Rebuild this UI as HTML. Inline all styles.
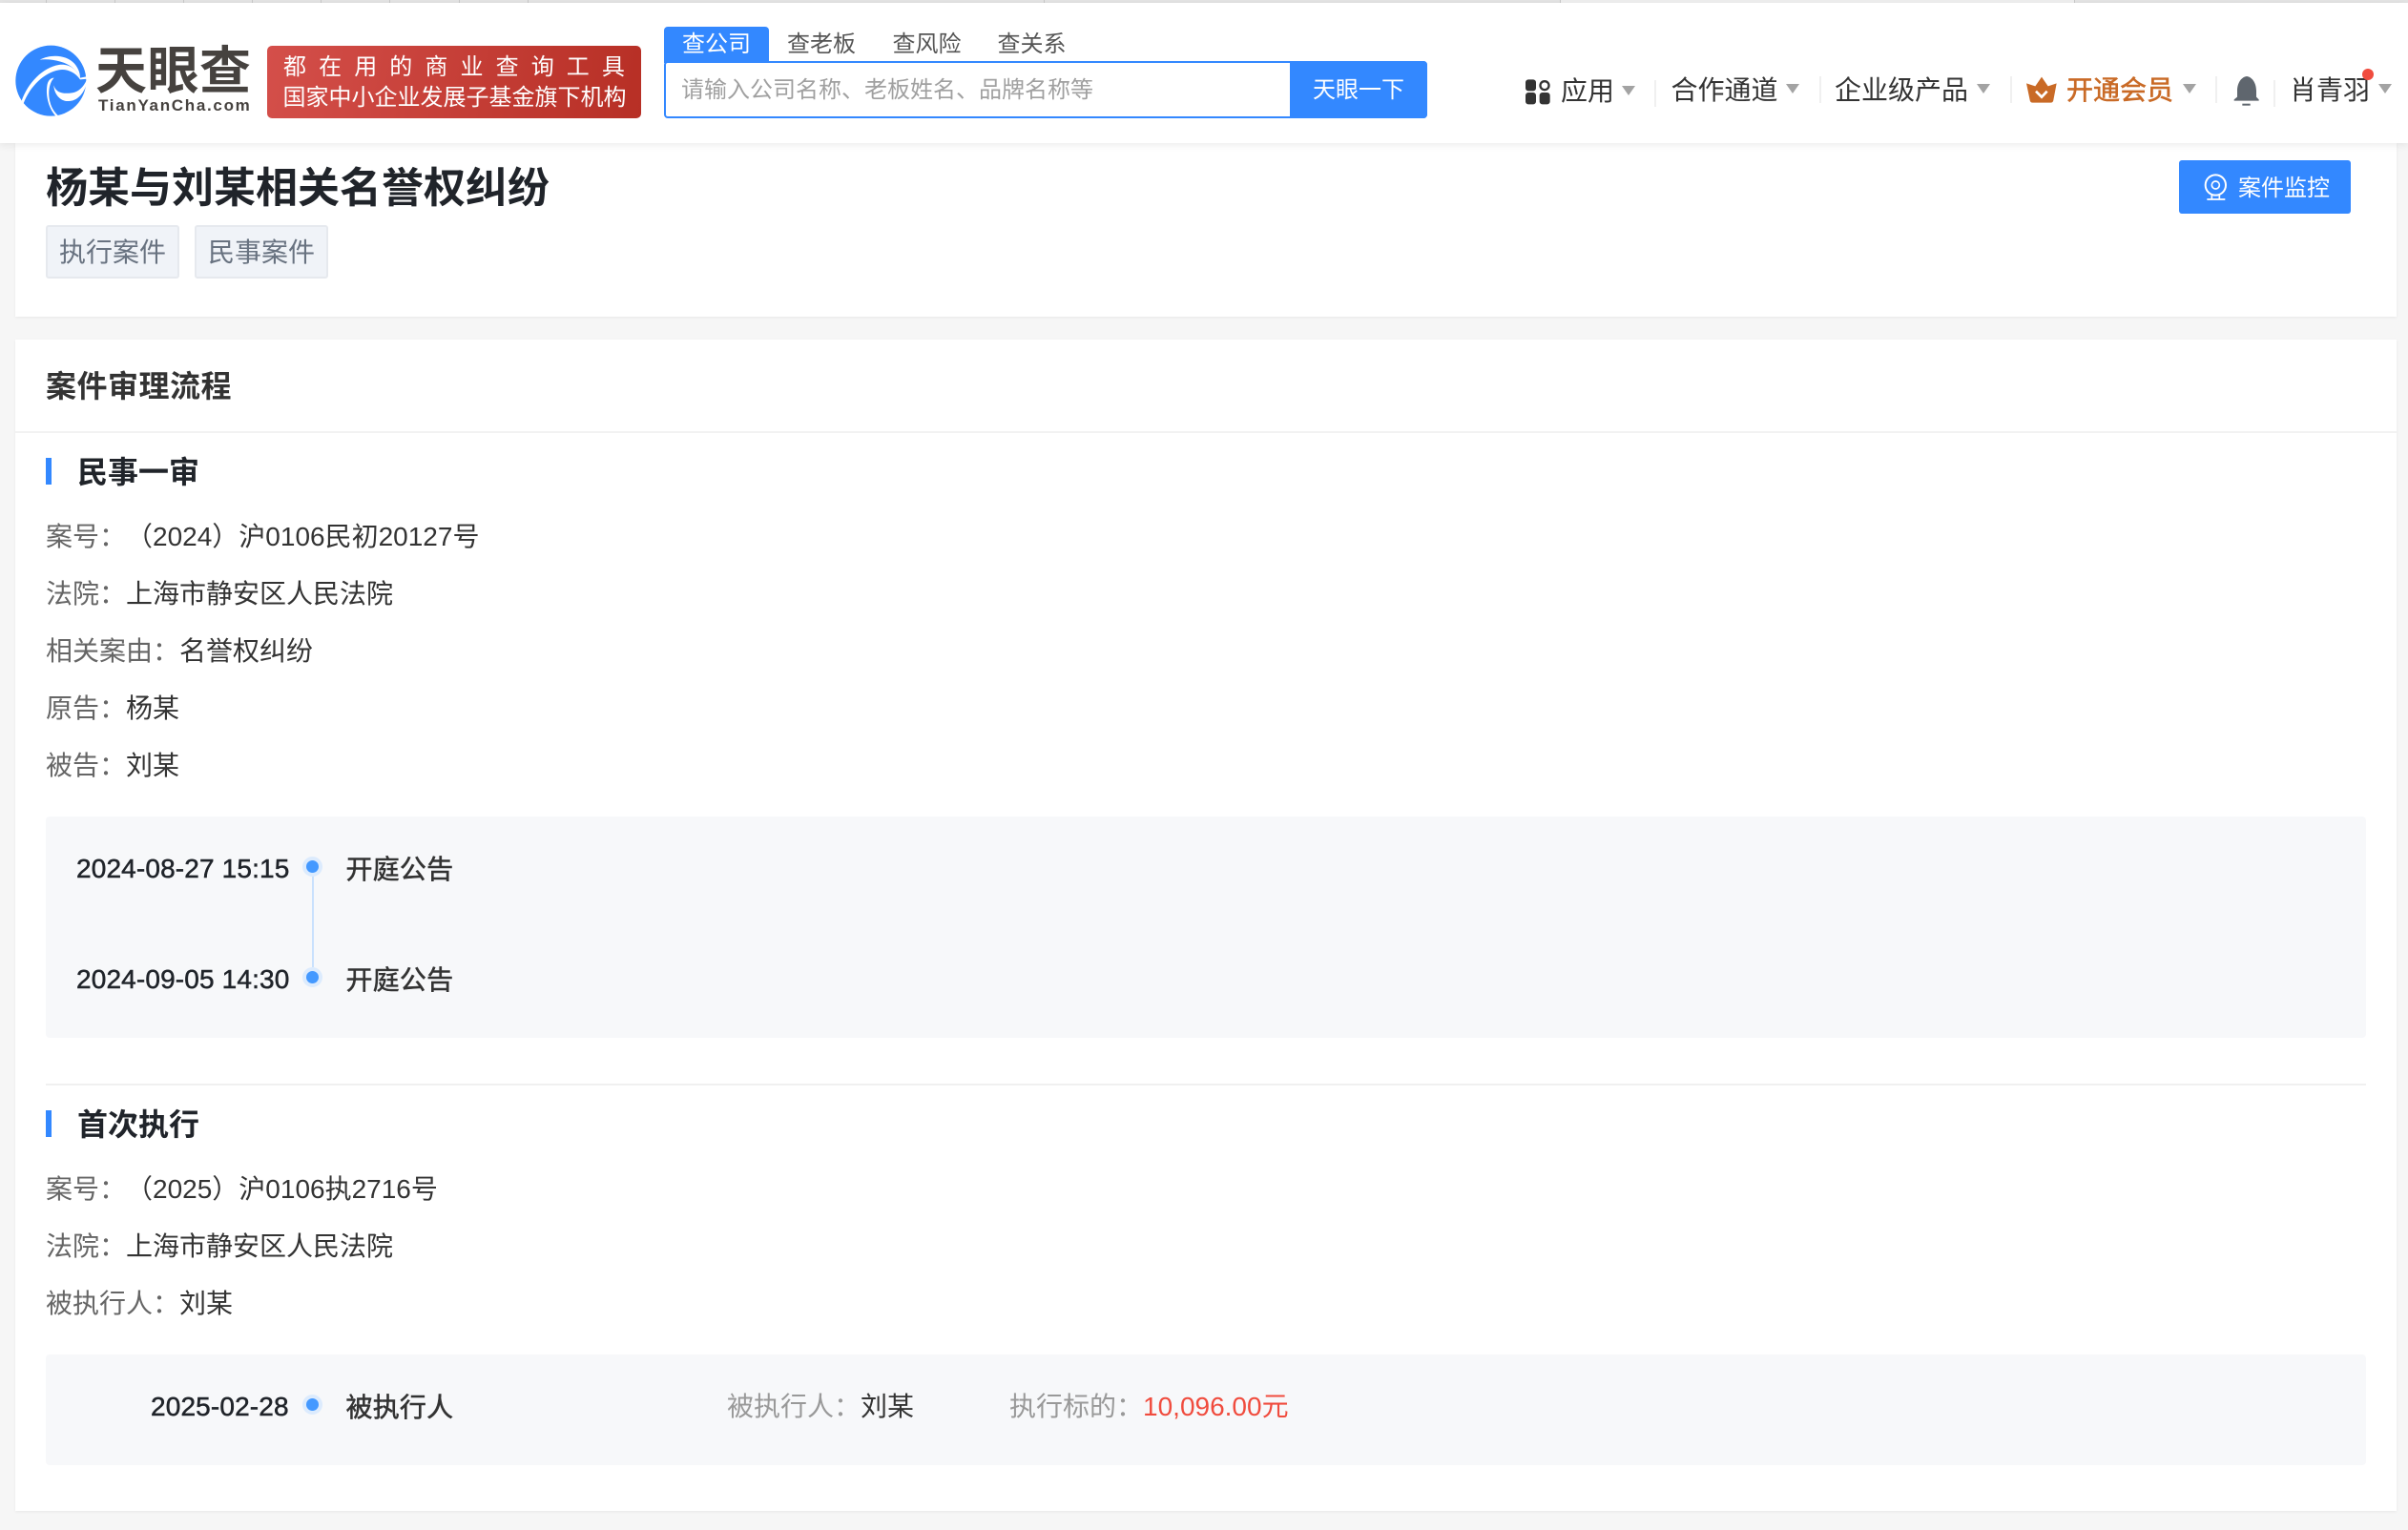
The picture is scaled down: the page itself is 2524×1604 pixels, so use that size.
<!DOCTYPE html>
<html lang="zh-CN"><head><meta charset="utf-8"><title>杨某与刘某相关名誉权纠纷</title>
<style>
html,body{margin:0;padding:0;width:2524px;height:1604px;overflow:hidden;background:#f6f6f6;font-family:"Liberation Sans","Noto Sans CJK SC",sans-serif;color:#333}
#r{position:relative;width:2524px;height:1604px;overflow:hidden}
.a{position:absolute}
.t{position:absolute;white-space:nowrap;line-height:40px;height:40px;font-size:28px}
.g{color:#666}.m{color:#333}
.b{font-weight:700}
.car{position:absolute;width:0;height:0;border-left:7.5px solid transparent;border-right:7.5px solid transparent;border-top:10px solid #a3a3a3}
.sep{position:absolute;width:2px;background:#f0f0f0}
.bar{position:absolute;left:48px;width:6px;height:28px;background:#3388ff}
.box{position:absolute;left:48px;width:2432px;background:#f7f8fa;border-radius:4px}
.dot{position:absolute;width:13px;height:13px;background:#4499ff;border:4px solid #dcebfd;border-radius:50%;left:317px;box-sizing:content-box}
.tag{position:absolute;top:236px;width:140px;height:56px;box-sizing:border-box;background:#f0f3f8;border:2px solid #e6e9ee;border-radius:3px;color:#687280;font-size:28px;line-height:53px;text-align:center}
.card{position:absolute;left:16px;width:2496px;background:#fff;box-shadow:0 1px 3px rgba(0,0,0,.06)}
.tm{-webkit-text-stroke:.5px #20242a;color:#20242a;letter-spacing:.15px}
.md{-webkit-text-stroke:.55px #333;color:#333;letter-spacing:.2px}
.cn{margin-left:14px}
</style></head><body><div id="r">

<!-- top browser strip -->
<div class="a" style="left:0;top:0;width:2524px;height:3px;background:#e4e4e4"></div>
<div class="a" style="left:1635px;top:0;width:539px;height:3px;background:#efefef"></div>
<div class="a" style="left:48px;top:0;width:1px;height:3px;background:#c9c9c9;box-shadow:72px 0 #c9c9c9,144px 0 #c9c9c9,216px 0 #c9c9c9,288px 0 #c9c9c9,360px 0 #c9c9c9,433px 0 #c9c9c9,505px 0 #c9c9c9,1046px 0 #c9c9c9,1587px 0 #c9c9c9,2126px 0 #c9c9c9"></div>

<!-- card 1 -->
<div class="card" style="top:150px;height:182px"></div>
<!-- header -->
<div class="a" style="left:0;top:3px;width:2524px;height:147px;background:#fff;box-shadow:0 2px 8px rgba(0,0,0,.08)"></div>

<!-- logo -->
<svg class="a" style="left:10px;top:40px" width="90" height="90" viewBox="0 0 270 270">
<circle cx="130" cy="134" r="111" fill="#3388ff"/>
<path fill="#fff" d="M95 68C130 50 178 52 204 80C216 94 222 110 222 125C212 100 190 82 160 74C140 68 115 65 95 68Z"/>
<path fill="#fff" d="M38 197C58 140 105 92 155 84C185 80 210 95 222 125L246 120L246 128L222 130C205 106 180 96 155 100C110 108 65 150 44 205Z"/>
<path fill="#fff" d="M140 125C125 140 120 170 127 200C132 222 145 238 158 248L148 248C125 225 113 185 118 150C120 135 128 125 140 125Z"/>
<path fill="#fff" d="M139 148C146 172 168 176 196 172C216 169 232 155 243 130L242 146C232 176 212 198 186 198C160 200 140 176 139 148Z"/>
</svg>
<div class="t b" style="left:100px;top:52px;font-size:54px;line-height:46px;height:46px;color:#46423f;letter-spacing:.5px">天眼查</div>
<div class="t b" style="left:103px;top:100px;font-size:17px;line-height:22px;height:22px;color:#46423f;letter-spacing:1.7px">TianYanCha.com</div>

<!-- red badge -->
<div class="a" style="left:280px;top:48px;width:392px;height:76px;border-radius:5px;background:linear-gradient(100deg,#d44f4a,#b72f25)"></div>
<div class="t" style="left:297px;top:51px;font-size:24px;color:#fff;letter-spacing:13.1px">都在用的商业查询工具</div>
<div class="t" style="left:296.5px;top:83px;font-size:24px;color:#fff">国家中小企业发展子基金旗下机构</div>

<!-- search -->
<div class="a" style="left:696px;top:28px;width:110px;height:38px;background:#3388ff;border-radius:4px 4px 0 0"></div>
<div class="t" style="left:715px;top:27px;font-size:24px;color:#fff">查公司</div>
<div class="t" style="left:825px;top:27px;font-size:24px;color:#555">查老板</div>
<div class="t" style="left:935.5px;top:27px;font-size:24px;color:#555">查风险</div>
<div class="t" style="left:1045.5px;top:27px;font-size:24px;color:#555">查关系</div>
<div class="a" style="left:696px;top:64px;width:800px;height:60px;box-sizing:border-box;border:2.5px solid #3388ff;border-radius:4px;background:#fff"></div>
<div class="a" style="left:1352px;top:64px;width:144px;height:60px;background:#3388ff;border-radius:0 4px 4px 0"></div>
<div class="t" style="left:714px;top:75px;font-size:24px;color:#a0a0a0">请输入公司名称、老板姓名、品牌名称等</div>
<div class="t" style="left:1376px;top:75px;font-size:24px;color:#fff">天眼一下</div>

<!-- nav -->
<svg class="a" style="left:1590px;top:70px" width="44" height="50" viewBox="0 0 132 150">
<rect x="27" y="40" width="33" height="36" rx="9" fill="#333"/>
<circle cx="87" cy="59" r="13.5" fill="none" stroke="#333" stroke-width="7"/>
<rect x="27" y="81" width="33" height="37" rx="9" fill="#333"/>
<rect x="71" y="81" width="33" height="37" rx="9" fill="#333"/>
</svg>
<div class="t" style="left:1636px;top:76px;color:#333">应用</div>
<div class="car" style="left:1700px;top:90px"></div>
<div class="sep" style="left:1734px;top:84px;height:28px"></div>
<div class="t" style="left:1751.5px;top:75px;color:#333">合作通道</div>
<div class="car" style="left:1872px;top:88px"></div>
<div class="sep" style="left:1907px;top:80px;height:28px"></div>
<div class="t" style="left:1923px;top:75px;color:#333">企业级产品</div>
<div class="car" style="left:2072px;top:88px"></div>
<div class="sep" style="left:2107px;top:80px;height:28px"></div>
<svg class="a" style="left:2115px;top:65px" width="40" height="60" viewBox="0 0 120 180" overflow="visible">
<path fill="#c96a26" d="M27 67L55 76L75 47L95 76L122 67L112 120Q111 128 103 128L47 128Q39 128 38 120Z"/>
<path fill="none" stroke="#fff" stroke-width="8" d="M57 92L75 110L92 92"/>
</svg>
<div class="t" style="left:2166px;top:75px;color:#c96a26;-webkit-text-stroke:.6px #c96a26">开通会员</div>
<div class="car" style="left:2288px;top:88px"></div>
<div class="sep" style="left:2322px;top:80px;height:28px"></div>
<svg class="a" style="left:2115px;top:65px" width="270" height="60" viewBox="0 0 810 180">
<path fill="#5f666e" d="M720 45C700 48 690 70 690 90L690 110L680 118L680 122L758 122L758 118L750 110L750 90C750 70 740 48 720 45Z"/>
<rect x="706" y="131" width="25" height="6" fill="#5f666e"/>
</svg>
<div class="sep" style="left:2383px;top:84px;height:28px"></div>
<div class="t" style="left:2400px;top:75px;color:#333">肖青羽</div>
<div class="car" style="left:2493px;top:88px"></div>
<div class="a" style="left:2476px;top:72px;width:12px;height:12px;border-radius:50%;background:#f04c3e"></div>

<!-- card1 content -->
<div class="t b" style="left:48px;top:178px;font-size:44px;color:#20242a">杨某与刘某相关名誉权纠纷</div>
<div class="tag" style="left:48px">执行案件</div>
<div class="tag" style="left:204px">民事案件</div>
<div class="a" style="left:2284px;top:168px;width:180px;height:56px;background:#3388ff;border-radius:3px"></div>
<svg class="a" style="left:2284px;top:168px" width="60" height="56" viewBox="0 0 180 168">
<circle cx="115" cy="78" r="32" fill="none" stroke="#fff" stroke-width="6"/>
<circle cx="115" cy="78" r="12" fill="none" stroke="#fff" stroke-width="5"/>
<path fill="none" stroke="#fff" stroke-width="5" d="M103 108V122M127 108V122M88 123H145"/>
</svg>
<div class="t" style="left:2346px;top:178px;font-size:24px;color:#fff">案件监控</div>

<!-- card 2 -->
<div class="card" style="top:356px;height:1228px"></div>
<div class="t b" style="left:48px;top:385px;font-size:32px;color:#333;letter-spacing:.5px">案件审理流程</div>
<div class="a" style="left:16px;top:452px;width:2496px;height:2px;background:#f2f2f2"></div>

<div class="bar" style="top:480px"></div>
<div class="t b" style="left:81px;top:475px;font-size:32px;color:#20242a">民事一审</div>
<div class="t g" style="left:48px;top:543px">案号：<span class="m cn">（2024）沪0106民初20127号</span></div>
<div class="t g" style="left:48px;top:603px">法院：<span class="m">上海市静安区人民法院</span></div>
<div class="t g" style="left:48px;top:663px">相关案由：<span class="m">名誉权纠纷</span></div>
<div class="t g" style="left:48px;top:723px">原告：<span class="m">杨某</span></div>
<div class="t g" style="left:48px;top:783px">被告：<span class="m">刘某</span></div>

<div class="box" style="top:856px;height:232px"></div>
<div class="a" style="left:326.5px;top:918px;width:2px;height:96px;background:#c9e1fd"></div>
<div class="dot" style="top:897.5px"></div>
<div class="dot" style="top:1013.5px"></div>
<div class="t tm" style="left:80px;top:891px">2024-08-27 15:15</div>
<div class="t md" style="left:362.5px;top:891.5px">开庭公告</div>
<div class="t tm" style="left:80px;top:1007px">2024-09-05 14:30</div>
<div class="t md" style="left:362.5px;top:1007.5px">开庭公告</div>

<div class="a" style="left:48px;top:1136px;width:2432px;height:2px;background:#f0f0f0"></div>
<div class="bar" style="top:1164px"></div>
<div class="t b" style="left:81px;top:1159px;font-size:32px;color:#20242a">首次执行</div>
<div class="t g" style="left:48px;top:1227px">案号：<span class="m cn">（2025）沪0106执2716号</span></div>
<div class="t g" style="left:48px;top:1287px">法院：<span class="m">上海市静安区人民法院</span></div>
<div class="t g" style="left:48px;top:1347px">被执行人：<span class="m">刘某</span></div>

<div class="box" style="top:1420px;height:116px"></div>
<div class="dot" style="top:1461.5px"></div>
<div class="t tm" style="left:158px;top:1455px">2025-02-28</div>
<div class="t md" style="left:362.5px;top:1455.5px">被执行人</div>
<div class="t" style="left:762px;top:1455px;color:#999">被执行人：<span class="m">刘某</span></div>
<div class="t" style="left:1058px;top:1455px;color:#999">执行标的：<span style="color:#f04c3e">10,096.00元</span></div>

</div></body></html>
